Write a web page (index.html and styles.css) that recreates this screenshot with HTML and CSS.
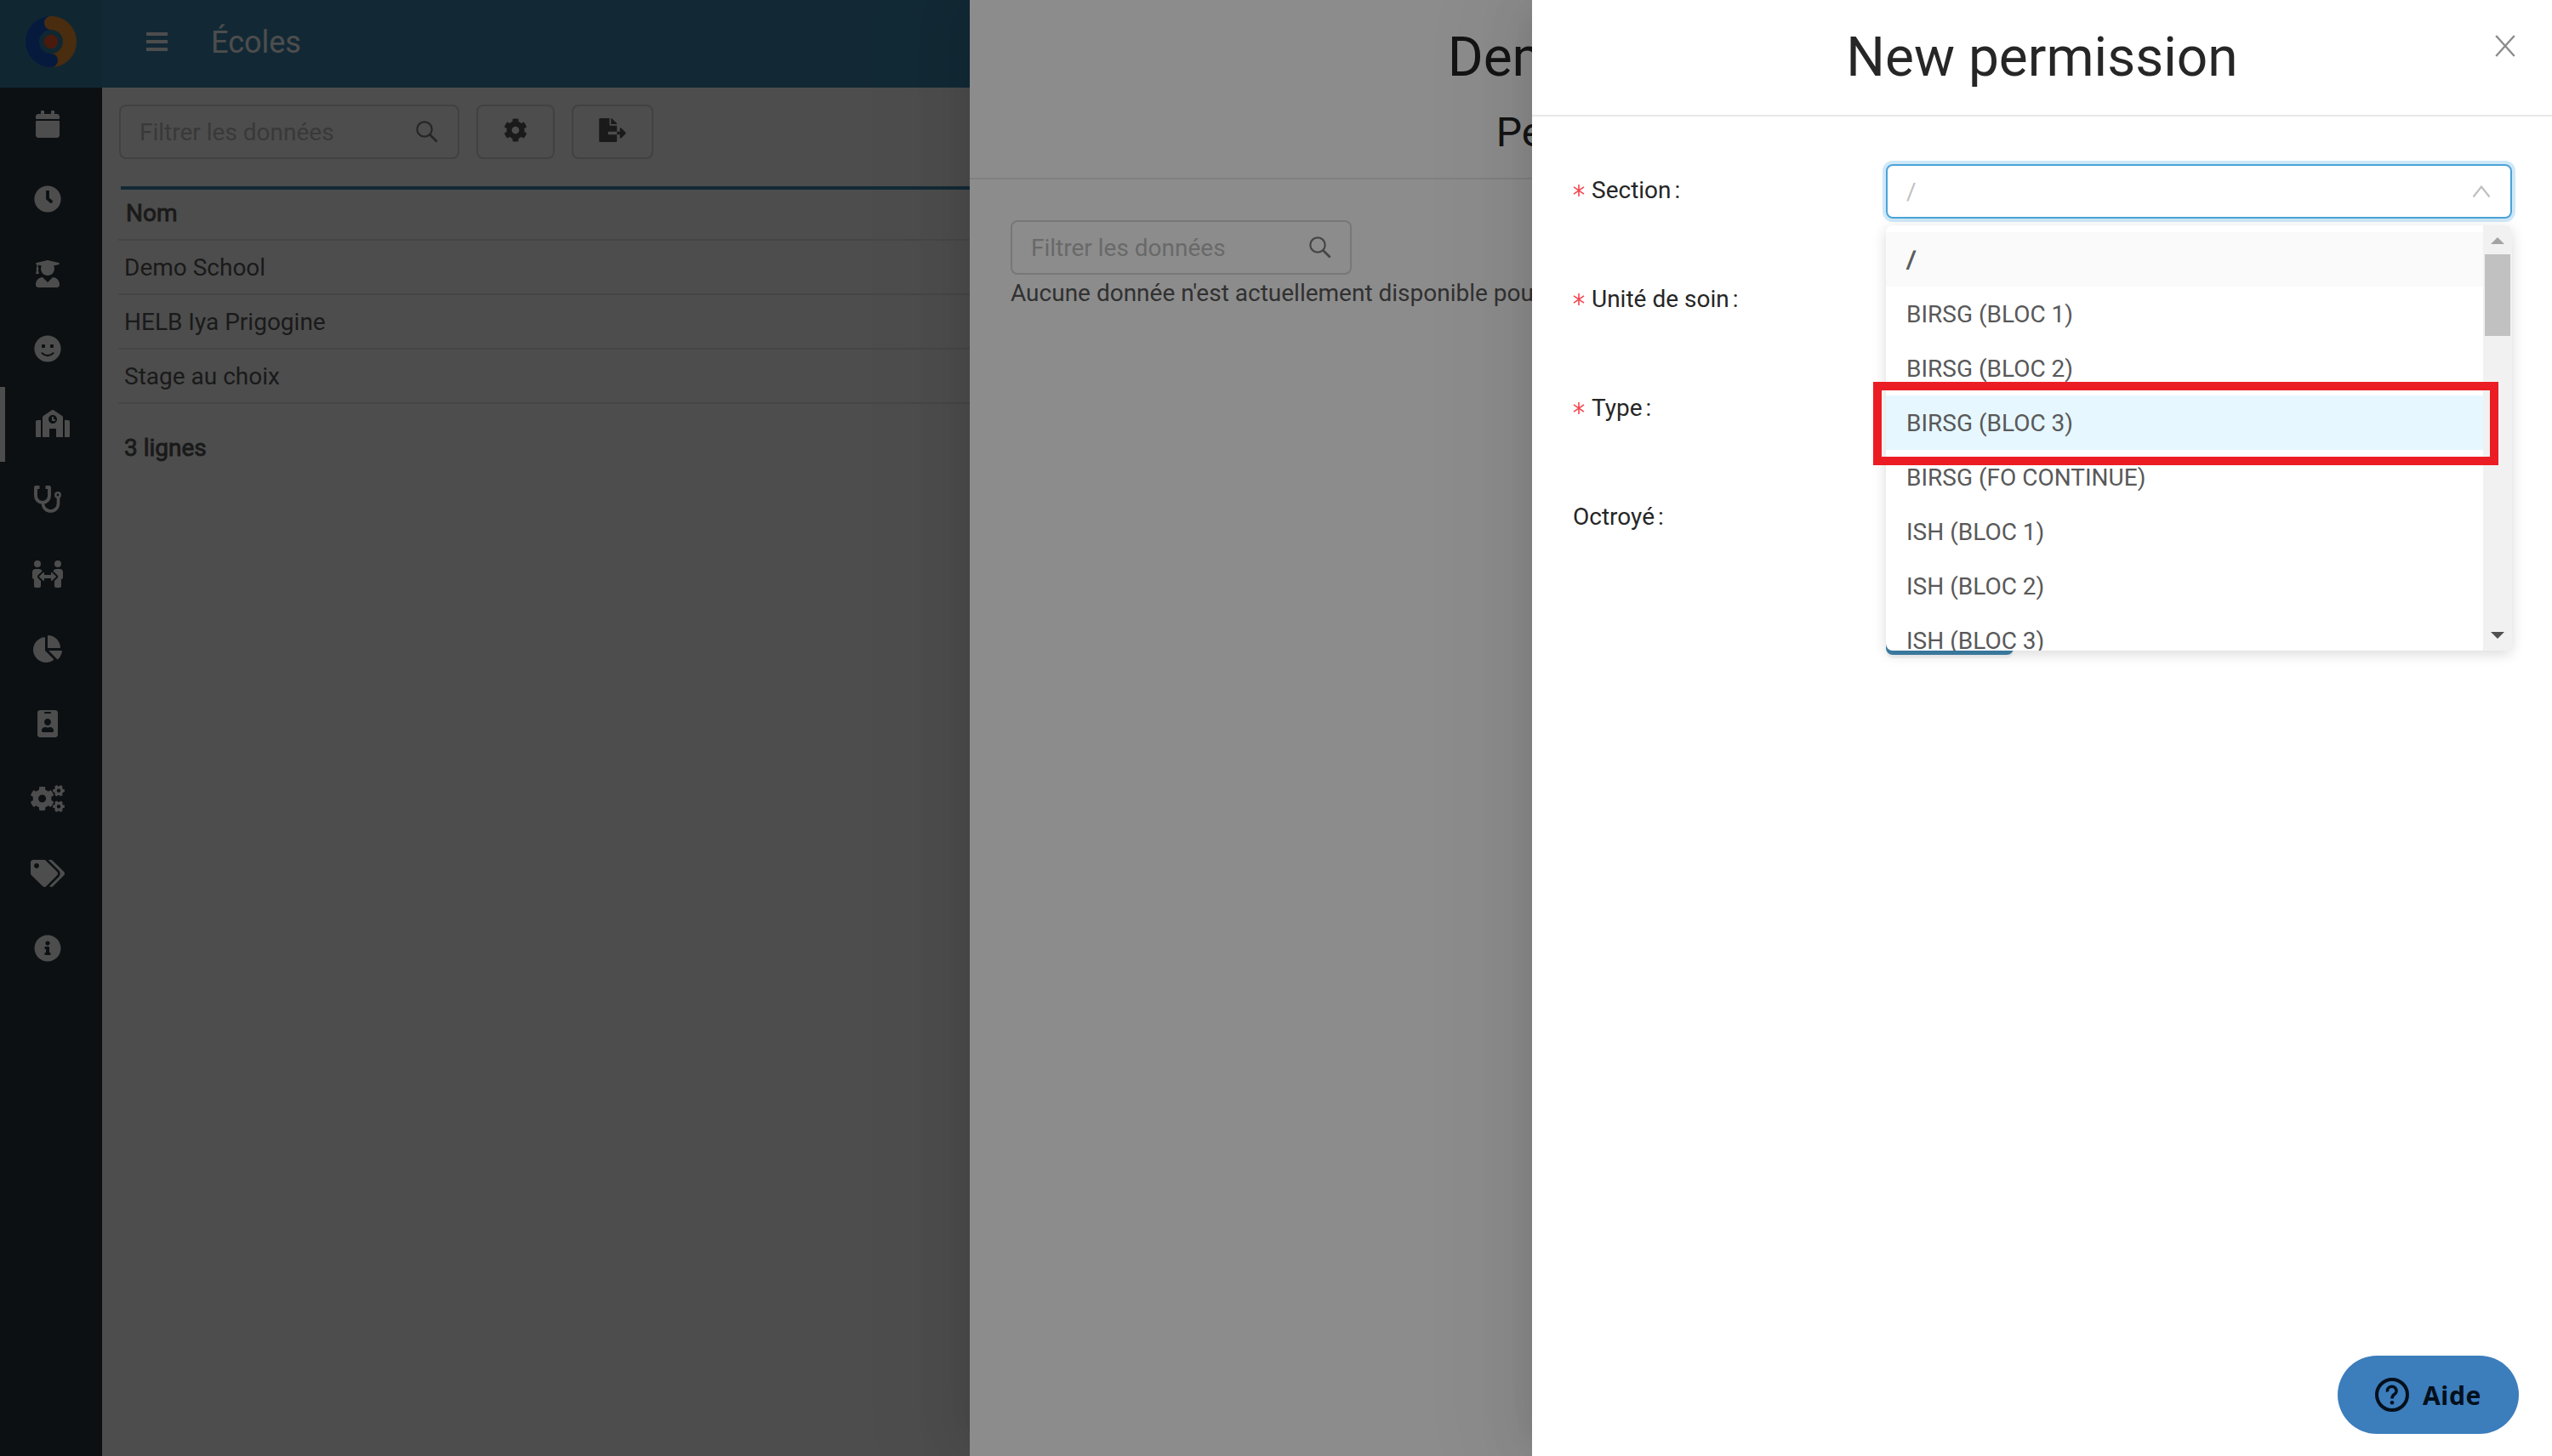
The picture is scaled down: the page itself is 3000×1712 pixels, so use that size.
FILE: index.html
```html
<!DOCTYPE html>
<html lang="fr">
<head>
<meta charset="utf-8">
<title>Écoles</title>
<link rel="stylesheet" href="styles.css">
</head>
<body>
<svg class="defs" aria-hidden="true">
  <defs>
    <symbol id="cog" viewBox="0 0 512 512"><path d="M487.4 315.7l-42.6-24.6c4.3-23.2 4.3-47 0-70.2l42.6-24.6c4.9-2.8 7.1-8.6 5.5-14-11.1-35.6-30-67.8-54.7-94.6-3.8-4.1-10-5.1-14.8-2.3L380.8 110c-17.9-15.4-38.5-27.3-60.8-35.1V25.8c0-5.6-3.9-10.5-9.4-11.7-36.7-8.2-74.3-7.8-109.2 0-5.5 1.2-9.4 6.1-9.4 11.7V75c-22.2 7.9-42.8 19.8-60.8 35.1L88.7 85.5c-4.9-2.8-11-1.9-14.8 2.3-24.7 26.7-43.6 58.9-54.7 94.6-1.7 5.4.6 11.2 5.5 14L67.3 221c-4.3 23.2-4.3 47 0 70.2l-42.6 24.6c-4.9 2.8-7.1 8.6-5.5 14 11.1 35.6 30 67.8 54.7 94.6 3.8 4.1 10 5.1 14.8 2.3l42.6-24.6c17.9 15.4 38.5 27.3 60.8 35.1v49.2c0 5.6 3.9 10.5 9.4 11.7 36.7 8.2 74.3 7.8 109.2 0 5.5-1.2 9.4-6.1 9.4-11.7v-49.2c22.2-7.9 42.8-19.8 60.8-35.1l42.6 24.6c4.9 2.8 11 1.9 14.8-2.3 24.7-26.7 43.6-58.9 54.7-94.6 1.5-5.5-.7-11.3-5.6-14.1zM256 336c-44.1 0-80-35.9-80-80s35.9-80 80-80 80 35.9 80 80-35.9 80-80 80z"/></symbol>
    <symbol id="search" viewBox="0 0 26 26"><g fill="none" stroke="currentColor"><circle cx="10" cy="10" r="8.7" stroke-width="2.2"/><path d="M16.2 16.2L24.6 24.6" stroke-width="2.8"/></g></symbol>
    <symbol id="required" viewBox="0 0 14 16"><path d="M7 1V15M1 3.8L13 12.2M13 3.8L1 12.2" fill="none" stroke="currentColor" stroke-width="1.6"/></symbol>
  </defs>
</svg>

<div class="app">
  <aside class="sidebar">
    <div class="brand">
      <svg width="60" height="60" viewBox="0 0 60 60" fill="none" stroke-width="16" stroke-linecap="round">
        <path d="M30 52A22 22 0 0 1 30 8" stroke="#175ad0" stroke-linecap="butt"/>
        <path d="M30 8A22 22 0 0 1 30 52" stroke="#f39530" stroke-linecap="butt"/>
        <circle cx="30" cy="8" r="8" fill="#f39530"/>
        <circle cx="30" cy="52" r="8" fill="#175ad0"/>
        <circle cx="30" cy="30" r="8.2" fill="#f85a2c"/>
      </svg>
    </div>
    <nav class="menu">
      <a class="item"><svg width="28" height="32" viewBox="0 0 448 512"><path d="M12 192h424c6.6 0 12 5.4 12 12v260c0 26.5-21.5 48-48 48H48c-26.5 0-48-21.5-48-48V204c0-6.6 5.4-12 12-12zm436-44v-36c0-26.5-21.5-48-48-48h-48V12c0-6.6-5.4-12-12-12h-40c-6.6 0-12 5.4-12 12v52H160V12c0-6.6-5.4-12-12-12h-40c-6.6 0-12 5.4-12 12v52H48C21.5 64 0 85.5 0 112v36c0 6.600 5.400 12 12 12h424c6.600 0 12-5.400 12-12z"/></svg></a>
      <a class="item"><svg width="32" height="32" viewBox="0 0 32 32"><circle cx="16" cy="16" r="15.600"/><path class="cut" d="M16 6V15.600L19.800 18.800" stroke-width="3.800" stroke-linejoin="round"/><circle class="hole" cx="20" cy="19" r="1.900"/></svg></a>
      <a class="item"><svg width="28" height="32" viewBox="0 0 448 512"><path d="M319.400 320.600L224 416l-95.400-95.400C57.100 323.700 0 382.200 0 454.400v9.600c0 26.500 21.500 48 48 48h352c26.500 0 48-21.500 48-48v-9.600c0-72.200-57.100-130.700-128.600-133.800zM13.600 79.800l6.400 1.500v58.400c-7 4.200-12 11.500-12 20.300 0 8.400 4.600 15.400 11.100 19.700L3.500 242c-1.700 6.900 2.100 14 7.600 14h41.800c5.500 0 9.300-7.100 7.600-14l-15.600-62.300C51.400 175.400 56 168.400 56 160c0-8.800-5-16.100-12-20.300V87.100l66 15.900c-8.600 17.200-14 36.400-14 57 0 70.700 57.300 128 128 128s128-57.300 128-128c0-20.600-5.300-39.800-14-57l96.300-23.200c18.200-4.400 18.200-27.100 0-31.500l-190.400-46c-13-3.100-26.700-3.100-39.700 0L13.600 48.200c-18.100 4.400-18.100 27.200 0 31.600z"/></svg></a>
      <a class="item"><svg width="32" height="32" viewBox="0 0 32 32"><circle cx="16" cy="16" r="15.600"/><rect class="hole" x="9" y="11" width="4" height="4" rx="1"/><rect class="hole" x="19" y="11" width="4" height="4" rx="1"/><path class="cut" d="M9.400 21.200Q16 27 22.600 21.200" stroke-width="2" stroke-linecap="round"/></svg></a>
      <a class="item active"><svg class="school" width="40" height="32" viewBox="0 0 640 512"><path d="M0 224v272c0 8.840 7.160 16 16 16h80V192H32c-17.670 0-32 14.330-32 32zm360-48h-24v-40c0-4.420-3.580-8-8-8h-16c-4.420 0-8 3.580-8 8v64c0 4.420 3.580 8 8 8h48c4.420 0 8-3.580 8-8v-16c0-4.420-3.580-8-8-8zm137.750-63.960l-160-106.670a32.020 32.020 0 0 0-35.500 0l-160 106.670A32.002 32.002 0 0 0 128 138.660V512h128V368c0-8.840 7.160-16 16-16h96c8.840 0 16 7.160 16 16v144h128V138.670c0-10.700-5.350-20.690-14.250-26.630zM320 256c-44.180 0-80-35.820-80-80s35.820-80 80-80 80 35.820 80 80-35.820 80-80 80zm288-64h-64v320h80c8.840 0 16-7.160 16-16V224c0-17.670-14.330-32-32-32z"/></svg></a>
      <a class="item"><svg class="line" width="32" height="32" viewBox="0 0 32 32"><path d="M6.500 2H2V12a8 8 0 0 0 16 0V2H13.500" stroke-width="3.900" stroke-linejoin="round"/><path d="M10.500 20v1a9 9 0 0 0 18 0V14" stroke-width="3.600"/><circle cx="28" cy="11" r="2.700" stroke-width="2.500"/></svg></a>
      <a class="item"><svg width="36" height="32" viewBox="0 0 576 512"><path d="M96,128A64,64,0,1,0,32,64,64,64,0,0,0,96,128Zm0,176.080a44.110,44.110,0,0,1,13.640-32L181.770,204c1.650-1.550,3.770-2.310,5.610-3.570A63.910,63.910,0,0,0,128,160H64A64,64,0,0,0,0,224v96a32,32,0,0,0,32,32V480a32,32,0,0,0,32,32h64a32,32,0,0,0,32-32V383.610l-50.360-47.530A44.080,44.080,0,0,1,96,304.080ZM480,128a64,64,0,1,0-64-64A64,64,0,0,0,480,128Zm32,32H448a63.910,63.910,0,0,0-59.380,40.420c1.840,1.270,4,2,5.620,3.590l72.120,68.060a44.370,44.370,0,0,1,0,64L416,383.620V480a32,32,0,0,0,32,32h64a32,32,0,0,0,32-32V352a32,32,0,0,0,32-32V224A64,64,0,0,0,512,160ZM444.400,295.340l-72.120-68.060A12,12,0,0,0,352,236v36H224V236a12,12,0,0,0-20.280-8.730L131.600,295.340a12.400,12.400,0,0,0,0,17.470l72.120,68.070A12,12,0,0,0,224,372.140V336H352v36.140a12,12,0,0,0,20.280,8.740l72.120-68.070A12.400,12.400,0,0,0,444.400,295.340Z"/></svg></a>
      <a class="item"><svg width="34" height="32" viewBox="0 0 544 512"><path d="M527.790 288H290.500l158.030 158.030c6.040 6.040 15.980 6.530 22.190.68 38.700-36.460 65.320-85.610 73.130-140.860 1.340-9.460-6.510-17.850-16.060-17.850zm-15.830-64.800C503.720 103.740 408.260 8.280 288.800.04 279.680-.59 272 7.100 272 16.240V240h223.770c9.140 0 16.820-7.680 16.190-16.800zM224 288V50.710c0-9.550-8.390-17.400-17.840-16.060C86.990 51.490-4.100 155.600.14 280.370 4.500 408.510 114.830 513.590 243.030 511.980c50.400-.63 96.970-16.870 135.260-44.030 7.900-5.600 8.420-17.230 1.570-24.080L224 288z"/></svg></a>
      <a class="item"><svg width="24" height="32" viewBox="0 0 384 512"><path d="M336 0H48C21.500 0 0 21.500 0 48v416c0 26.500 21.500 48 48 48h288c26.500 0 48-21.500 48-48V48c0-26.500-21.500-48-48-48zM144 32h96c8.800 0 16 7.200 16 16s-7.200 16-16 16h-96c-8.800 0-16-7.200-16-16s7.200-16 16-16zm48 128c35.300 0 64 28.700 64 64s-28.700 64-64 64-64-28.700-64-64 28.700-64 64-64zm112 236.800c0 10.600-10 19.200-22.400 19.200H102.400C90 416 80 407.400 80 396.800v-19.200c0-31.800 30.100-57.600 67.200-57.600h5c12.300 5.100 25.700 8 39.800 8s27.600-2.900 39.800-8h5c37.100 0 67.200 25.800 67.200 57.600v19.200z"/></svg></a>
      <a class="item"><svg width="40" height="32" viewBox="0 0 40 32"><use href="#cog" x="-0.900" y="1.500" width="29" height="29"/><g transform="rotate(30 33 6.700)"><use href="#cog" x="25.900" y="-0.400" width="14.200" height="14.200"/></g><g transform="rotate(30 33 25.300)"><use href="#cog" x="25.900" y="18.200" width="14.200" height="14.200"/></g></svg></a>
      <a class="item"><svg width="40" height="32" viewBox="0 0 640 512"><path d="M497.941 225.941L286.059 14.059A48 48 0 0 0 252.118 0H48C21.490 0 0 21.490 0 48v204.118a48 48 0 0 0 14.059 33.941l211.882 211.882c18.744 18.745 49.136 18.746 67.882 0l204.118-204.118c18.745-18.745 18.745-49.137 0-67.882zM112 160c-26.510 0-48-21.490-48-48s21.490-48 48-48 48 21.490 48 48-21.490 48-48 48zm513.941 133.823L421.823 497.941c-18.745 18.745-49.137 18.745-67.882 0l-.36-.36L527.640 323.522c16.999-16.999 26.360-39.600 26.360-63.640s-9.362-46.641-26.360-63.640L331.397 0h48.721a48 48 0 0 1 33.941 14.059l211.882 211.882c18.745 18.745 18.745 49.137 0 67.882z"/></svg></a>
      <a class="item"><svg width="32" height="32" viewBox="0 0 512 512"><path d="M256 8C119.043 8 8 119.083 8 256c0 136.997 111.043 248 248 248s248-111.003 248-248C504 119.083 392.957 8 256 8zm0 110c23.196 0 42 18.804 42 42s-18.804 42-42 42-42-18.804-42-42 18.804-42 42-42zm56 254c0 6.627-5.373 12-12 12h-88c-6.627 0-12-5.373-12-12v-24c0-6.627 5.373-12 12-12h12v-64h-12c-6.627 0-12-5.373-12-12v-24c0-6.627 5.373-12 12-12h64c6.627 0 12 5.373 12 12v100h12c6.627 0 12 5.373 12 12v24z"/></svg></a>
    </nav>
  </aside>
  <div class="page">
    <header class="topbar">
      <span class="burger"><i></i><i></i><i></i></span>
      <span class="page-title">Écoles</span>
    </header>
    <main class="content">
      <div class="toolbar">
        <div class="filter"><span>Filtrer les données</span><svg width="26" height="26"><use href="#search"/></svg></div>
        <div class="btn btn-cog"><svg width="28" height="28"><use href="#cog"/></svg></div>
        <div class="btn btn-export"><svg width="32" height="28" viewBox="0 0 576 512"><path d="M384 121.900c0-6.300-2.500-12.400-7-16.900L279.100 7c-4.500-4.500-10.600-7-17-7H256v128h128zM571 308l-95.700-96.400c-10.100-10.100-27.400-3-27.400 11.300V288h-64v64h64v65.200c0 14.300 17.300 21.400 27.400 11.300L571 332c6.600-6.600 6.600-17.400 0-24zm-379 28v-32c0-8.800 7.200-16 16-16h176V160H248c-13.200 0-24-10.800-24-24V0H24C10.700 0 0 10.700 0 24v464c0 13.300 10.700 24 24 24h336c13.300 0 24-10.700 24-24V352H208c-8.800 0-16-7.200-16-16z"/></svg></div>
      </div>
      <div class="table">
        <div class="thead">Nom</div>
        <div class="row">Demo School</div>
        <div class="row">HELB Iya Prigogine</div>
        <div class="row">Stage au choix</div>
      </div>
      <div class="count">3 lignes</div>
    </main>
  </div>
</div>

<div class="mask"></div>
<section class="drawer drawer-school">
  <header class="drawer-head">
    <h1>Demo School</h1>
    <h2>Permissions</h2>
  </header>
  <div class="drawer-body">
    <div class="filter"><span>Filtrer les données</span><svg width="26" height="26"><use href="#search"/></svg></div>
    <p class="empty">Aucune donnée n'est actuellement disponible pour</p>
  </div>
</section>

<div class="mask"></div>
<section class="drawer drawer-permission">
  <header class="drawer-head">
    <h1>New permission</h1>
    <svg class="close" width="24" height="26" viewBox="0 0 24 26"><path d="M1.200 1L22.800 25M22.800 1L1.200 25" fill="none" stroke="#8c8c8c" stroke-width="2.400"/></svg>
  </header>
  <form class="form">
    <div class="field">
      <label><svg class="req" width="14" height="16"><use href="#required"/></svg>Section<b>:</b></label>
      <div class="select"><span>/</span><svg width="22" height="16" viewBox="0 0 22 16"><path d="M1.500 14.500L11 2.500L20.500 14.500" fill="none" stroke="#bfbfbf" stroke-width="2.200"/></svg></div>
    </div>
    <div class="field"><label><svg class="req" width="14" height="16"><use href="#required"/></svg>Unité de soin<b>:</b></label></div>
    <div class="field"><label><svg class="req" width="14" height="16"><use href="#required"/></svg>Type<b>:</b></label></div>
    <div class="field"><label>Octroyé<b>:</b></label></div>
    <div class="field"><div class="submit"></div></div>
  </form>
  <div class="dropdown">
    <ul class="options">
      <li class="selected">/</li>
      <li>BIRSG (BLOC 1)</li>
      <li>BIRSG (BLOC 2)</li>
      <li class="hover">BIRSG (BLOC 3)</li>
      <li>BIRSG (FO CONTINUE)</li>
      <li>ISH (BLOC 1)</li>
      <li>ISH (BLOC 2)</li>
      <li>ISH (BLOC 3)</li>
    </ul>
    <div class="scrollbar"><i class="up"></i><i class="thumb"></i><i class="down"></i></div>
  </div>
  <div class="highlight"></div>
  <div class="help">
    <svg width="40" height="40" viewBox="0 0 40 40" fill="none" stroke="#03101c" stroke-width="4"><circle cx="20" cy="20" r="18"/><path d="M14.600 16.500A5.300 5 0 1 1 22.600 19.500Q20 21.200 20 24.400" stroke-width="3.600"/><circle cx="20" cy="29.300" r="2.300" fill="#03101c" stroke="none"/></svg>
    <span>Aide</span>
  </div>
</section>
</body>
</html>
```
FILE: styles.css
```css
* { box-sizing: border-box; }

body {
  margin: 0;
  width: 3000px;
  height: 1712px;
  position: relative;
  overflow: hidden;
  font-family: Roboto, "Liberation Sans", sans-serif;
  font-size: 28px;
  color: #595959;
  background: #fff;
}

.defs { position: absolute; width: 0; height: 0; }
h1, h2, p, ul { margin: 0; padding: 0; font-weight: 400; }
svg { display: block; flex: none; }

.app { display: flex; height: 1712px; }

.sidebar { width: 120px; background: #28383f; color: #fff; }
.brand {
  height: 103px;
  padding: 19px 30px;
  background: #3881a8;
}
.menu { display: flex; flex-direction: column; }
.item {
  height: 88.1px;
  display: flex;
  align-items: center;
  justify-content: center;
  padding: 0 8px 2px 0;
}
.item svg { fill: #fff; }
.item .line { fill: none; stroke: #fff; }
.item .cut { fill: none; stroke: #28383f; }
.item .hole { fill: #28383f; }
.item.active { border-left: 6px solid #fff; padding: 0 2px 2px 0; }

.page { flex: 1; display: flex; flex-direction: column; }
.topbar {
  height: 103px;
  background: #3d8ab3;
  color: #fff;
  display: flex;
  align-items: center;
  gap: 51px;
  padding: 0 0 5px 52px;
}
.burger { display: flex; flex-direction: column; gap: 5px; }
.burger i { width: 25px; height: 4px; background: #fff; }
.page-title { font-size: 36px; line-height: 44px; padding-top: 2px; }

.content { padding: 20px; }
.toolbar { display: flex; gap: 20px; margin-bottom: 32px; }
.filter {
  width: 400px;
  height: 64px;
  border: 2px solid #d9d9d9;
  border-radius: 8px;
  padding: 0 23px 0 22px;
  display: flex;
  align-items: center;
  justify-content: space-between;
  color: #bfbfbf;
}
.filter svg { color: #7f7f7f; }
.btn {
  height: 64px;
  border: 2px solid #d9d9d9;
  border-radius: 8px;
  display: flex;
  justify-content: center;
  align-items: center;
  padding-bottom: 4px;
  fill: #595959;
}
.btn-cog { width: 92px; }
.btn-export { width: 96px; }

.table { margin-right: -20px; }
.thead {
  margin-left: 2px;
  border-top: 4px solid #3d8ab3;
  padding: 0 6px 3px;
  line-height: 55px;
  -webkit-text-stroke: .9px currentColor;
}
.row {
  border-top: 2px solid #e8e8e8;
  height: 64px;
  line-height: 64px;
  padding-left: 7px;
  margin-left: -1px;
}
.row:last-child { height: 66px; border-bottom: 2px solid #e8e8e8; }
.count { margin: 31px 0 0 6px; line-height: 42px; -webkit-text-stroke: .9px currentColor; }

.mask {
  position: absolute;
  inset: 0;
  background: rgba(0, 0, 0, .45);
}

.drawer {
  position: absolute;
  top: 0;
  bottom: 0;
  background: #fff;
  box-shadow: -12px 0 32px -16px rgba(0, 0, 0, .08), -18px 0 56px rgba(0, 0, 0, .05), -24px 0 96px 32px rgba(0, 0, 0, .03);
}
.drawer-head { border-bottom: 2px solid #e8e8e8; text-align: center; color: #262626; }
.drawer-head h1 { font-size: 64px; line-height: 88px; }
.drawer-head h2 { font-size: 48px; line-height: 64px; }

.drawer-school { left: 1140px; width: 1503px; }
.drawer-school .drawer-head { height: 211px; padding-top: 24px; }
.drawer-school h2 { margin-top: 12px; }
.drawer-body { padding: 48px; }
.drawer-body .filter { width: 401px; padding-right: 22px; }
.empty { line-height: 44px; white-space: nowrap; }

.drawer-permission { left: 1801px; width: 1199px; }
.drawer-permission .drawer-head { height: 137px; padding-top: 24px; }
.close { position: absolute; top: 41px; right: 43px; }

.form { padding: 56px 47px 0 48px; }
.field {
  display: grid;
  grid-template-columns: 368px 1fr;
  height: 128px;
  align-items: start;
}
.field label {
  height: 62px;
  line-height: 62px;
  display: flex;
  align-items: center;
  color: #262626;
}
.field b { font-weight: 400; margin-left: 4px; }
.req { color: #f5454e; margin-right: 8px; }
.select {
  height: 64px;
  border: 2px solid #4aa3d8;
  border-radius: 8px;
  box-shadow: 0 0 0 4px #cfe8f8;
  display: flex;
  align-items: center;
  justify-content: space-between;
  padding: 0 23px 0 22px;
  color: #bfbfbf;
}
.submit {
  grid-column: 2;
  width: 150px;
  height: 65px;
  background: #3f82aa;
  border-radius: 8px;
  box-shadow: 0 4px 0 rgba(0, 0, 0, .045);
}

.dropdown {
  position: absolute;
  left: 416px;
  top: 265px;
  width: 736px;
  height: 500px;
  background: #fff;
  border-radius: 8px;
  box-shadow: 0 4px 16px rgba(0, 0, 0, .15);
  overflow: hidden;
  display: flex;
}
.options { flex: 1; list-style: none; padding-top: 8px; }
.options li { height: 64px; line-height: 66px; padding-left: 24px; }
.options .selected { background: #fafafa; -webkit-text-stroke: .9px currentColor; }
.options .hover { background: #e6f7ff; }
.scrollbar {
  width: 34px;
  background: #f1f1f1;
  display: flex;
  flex-direction: column;
  align-items: center;
  padding: 14px 0;
}
.up, .down { border: 8px solid transparent; }
.up { border-top: 0; border-bottom-color: #a3a3a3; }
.down { border-bottom: 0; border-top-color: #505050; margin-top: auto; }
.thumb { width: 30px; height: 96px; margin-top: 12px; background: #c1c1c1; }

.highlight {
  position: absolute;
  left: 401px;
  top: 449px;
  width: 735px;
  height: 98px;
  border: 10px solid #ec1c24;
}

.help {
  position: absolute;
  right: 39px;
  bottom: 26px;
  width: 213px;
  height: 92px;
  border-radius: 46px;
  background: #3c7dbc;
  display: flex;
  align-items: center;
  padding-left: 44px;
  gap: 16px;
  font: 700 30px "Noto Sans", sans-serif;
  letter-spacing: .6px;
  color: #03101c;
}
```
